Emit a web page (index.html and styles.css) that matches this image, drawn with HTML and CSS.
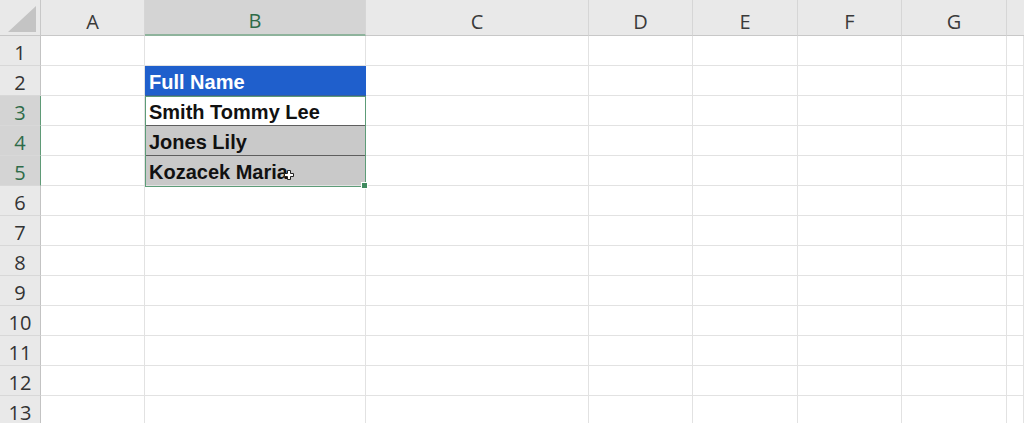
FILE: index.html
```html
<!DOCTYPE html>
<html>
<head>
<meta charset="utf-8">
<link rel="stylesheet" href="styles.css">
</head>
<body>
<div class="sheet">
  <div class="grid">
    <div class="corner"><svg class="tri" width="28" height="26" viewBox="0 0 28 26"><polygon points="28,0 28,26 0,26" fill="#c4c4c4"/></svg></div>
    <div class="ch">A</div><div class="ch ch-sel">B</div><div class="ch">C</div><div class="ch">D</div><div class="ch">E</div><div class="ch">F</div><div class="ch">G</div><div class="ch ch-last"></div>

    <div class="rh">1</div><div class="c"></div><div class="c"></div><div class="c"></div><div class="c"></div><div class="c"></div><div class="c"></div><div class="c"></div><div class="c"></div>
    <div class="rh">2</div><div class="c"></div><div class="c b-head">Full Name</div><div class="c"></div><div class="c"></div><div class="c"></div><div class="c"></div><div class="c"></div><div class="c"></div>
    <div class="rh rh-sel">3</div><div class="c"></div><div class="c b-val b-div">Smith Tommy Lee</div><div class="c"></div><div class="c"></div><div class="c"></div><div class="c"></div><div class="c"></div><div class="c"></div>
    <div class="rh rh-sel">4</div><div class="c"></div><div class="c b-val b-gray b-div">Jones Lily</div><div class="c"></div><div class="c"></div><div class="c"></div><div class="c"></div><div class="c"></div><div class="c"></div>
    <div class="rh rh-sel">5</div><div class="c"></div><div class="c b-val b-gray">Kozacek Maria</div><div class="c"></div><div class="c"></div><div class="c"></div><div class="c"></div><div class="c"></div><div class="c"></div>
    <div class="rh">6</div><div class="c"></div><div class="c"></div><div class="c"></div><div class="c"></div><div class="c"></div><div class="c"></div><div class="c"></div><div class="c"></div>
    <div class="rh">7</div><div class="c"></div><div class="c"></div><div class="c"></div><div class="c"></div><div class="c"></div><div class="c"></div><div class="c"></div><div class="c"></div>
    <div class="rh">8</div><div class="c"></div><div class="c"></div><div class="c"></div><div class="c"></div><div class="c"></div><div class="c"></div><div class="c"></div><div class="c"></div>
    <div class="rh">9</div><div class="c"></div><div class="c"></div><div class="c"></div><div class="c"></div><div class="c"></div><div class="c"></div><div class="c"></div><div class="c"></div>
    <div class="rh">10</div><div class="c"></div><div class="c"></div><div class="c"></div><div class="c"></div><div class="c"></div><div class="c"></div><div class="c"></div><div class="c"></div>
    <div class="rh">11</div><div class="c"></div><div class="c"></div><div class="c"></div><div class="c"></div><div class="c"></div><div class="c"></div><div class="c"></div><div class="c"></div>
    <div class="rh">12</div><div class="c"></div><div class="c"></div><div class="c"></div><div class="c"></div><div class="c"></div><div class="c"></div><div class="c"></div><div class="c"></div>
    <div class="rh">13</div><div class="c"></div><div class="c"></div><div class="c"></div><div class="c"></div><div class="c"></div><div class="c"></div><div class="c"></div><div class="c"></div>
  </div>
  <div class="selection"><span class="handle"></span></div>
  <svg class="cursor" width="12" height="12" viewBox="0 0 12 12"><path d="M4.5 1.5h3v3h3v3h-3v3h-3v-3h-3v-3h3z" fill="#fff" stroke="#222" stroke-width="1"/></svg>
</div>
</body>
</html>
```

FILE: styles.css
```css
html, body {
  margin: 0;
  padding: 0;
  background: #ffffff;
  overflow: hidden;
}

.sheet {
  position: relative;
  width: 1024px;
  height: 423px;
  overflow: hidden;
}

.grid {
  display: grid;
  grid-template-columns: 41px 104px 221px 223px 104px 105px 104px 105px 1fr;
  grid-template-rows: 36px repeat(13, 30px);
  font-family: "Open Sans", "Noto Sans", sans-serif;
}

.grid > div {
  box-sizing: border-box;
}

.corner {
  background: #e9e9e9;
  border-right: 1px solid #c8c8c8;
  border-bottom: 1px solid #c8c8c8;
  display: flex;
  align-items: flex-end;
  justify-content: flex-end;
  padding: 0 4px 3px 0;
}

.tri {
  display: block;
}

.ch {
  background: #e9e9e9;
  border-right: 1px solid #d6d6d6;
  border-bottom: 1px solid #c8c8c8;
  color: #3a3a3a;
  font-size: 20px;
  display: flex;
  align-items: center;
  justify-content: center;
  padding-top: 7px;
}

.ch-sel {
  background: #d4d4d4;
  color: #2e6b48;
  border-bottom: 2px solid #8eb39c;
}

.ch-last {
  border-right: none;
}

.rh {
  background: #e9e9e9;
  border-right: 1px solid #c3c3c3;
  border-bottom: 1px solid #d8d8d8;
  color: #333333;
  font-size: 20px;
  display: flex;
  align-items: center;
  justify-content: center;
  padding-top: 3px;
}

.rh-sel {
  background: #d4d4d4;
  color: #2e6b48;
  border-right: 1px solid #5f9a76;
}

.c {
  border-right: 1px solid #e2e2e2;
  border-bottom: 1px solid #e2e2e2;
  background: #ffffff;
}

.b-head {
  background: #1f5fcc;
  color: #ffffff;
  font-family: "Liberation Sans", Arial, sans-serif;
  font-weight: bold;
  font-size: 20px;
  display: flex;
  align-items: center;
  padding: 4px 0 0 4px;
  border-bottom-color: #3a5f9a;
  border-right-color: #1f5fcc;
}

.b-val {
  color: #111111;
  font-family: "Liberation Sans", Arial, sans-serif;
  font-weight: bold;
  font-size: 20px;
  display: flex;
  align-items: center;
  padding: 4px 0 0 4px;
}

.b-gray {
  background: #c9c9c9;
}

.b-div {
  border-bottom-color: #5e5e5e;
}

.selection {
  position: absolute;
  left: 145px;
  top: 96px;
  width: 221px;
  height: 91px;
  box-sizing: border-box;
  border: 1px solid #5d9c78;
  pointer-events: none;
}

.handle {
  position: absolute;
  right: -3px;
  bottom: -3px;
  width: 5px;
  height: 5px;
  background: #3f8a5e;
  border: 1px solid #ffffff;
}

.cursor {
  position: absolute;
  left: 283px;
  top: 169px;
}
```
